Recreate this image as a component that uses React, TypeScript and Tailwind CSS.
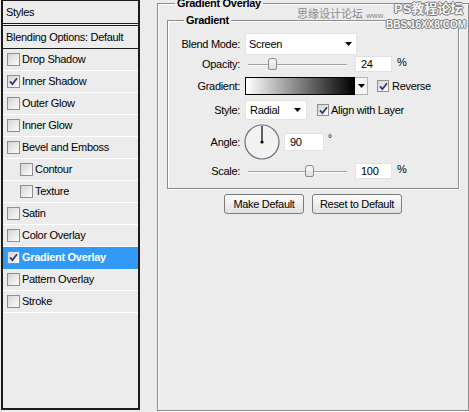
import type { ReactNode } from 'react'

const items: { label: string; checked?: boolean; indent?: boolean; active?: boolean }[] = [
  { label: 'Drop Shadow' },
  { label: 'Inner Shadow', checked: true },
  { label: 'Outer Glow' },
  { label: 'Inner Glow' },
  { label: 'Bevel and Emboss' },
  { label: 'Contour', indent: true },
  { label: 'Texture', indent: true },
  { label: 'Satin' },
  { label: 'Color Overlay' },
  { label: 'Gradient Overlay', checked: true, active: true },
  { label: 'Pattern Overlay' },
  { label: 'Stroke' },
]

function Check({ checked, size = 13 }: { checked?: boolean; size?: number }) {
  return (
    <span
      className="shrink-0 border border-[#8f8f8f] bg-[linear-gradient(135deg,#d4d4d4,#fdfdfd)] flex items-center justify-center"
      style={{ width: size, height: size }}
    >
      {checked && (
        <svg width="9" height="9" viewBox="0 0 9 9">
          <path d="M1 4.3 L3.4 7 L8 1.2" fill="none" stroke="#2f3b78" strokeWidth="1.8" />
        </svg>
      )}
    </span>
  )
}

function Arrow() {
  return (
    <svg width="7" height="4" viewBox="0 0 7 4">
      <path d="M0 0 H7 L3.5 4 Z" fill="#000" />
    </svg>
  )
}

function Slider({ pos }: { pos: number }) {
  return (
    <div className="relative w-[99px] h-[13px] ml-[3px]">
      <div className="absolute left-0 right-0 top-[6px] border-t border-[#a3a3a3] border-b border-b-white" />
      <div
        className="absolute top-0 w-[9px] h-[12px] rounded-t-[3px] rounded-b-[2px] border border-[#8a8a8a] bg-[linear-gradient(#fafafa,#dedede)]"
        style={{ left: pos }}
      />
    </div>
  )
}

function Row({ label, h, children }: { label: string; h: number; children: ReactNode }) {
  return (
    <div className="flex items-center" style={{ height: h }}>
      <span className="w-[72px] text-right">{label}</span>
      <div className="ml-[5px] flex items-center">{children}</div>
    </div>
  )
}

function Field({ value, w = 37, h = 16 }: { value: string; w?: number; h?: number }) {
  return (
    <span
      className="bg-white border border-[#e2e2e2] pl-[5px] flex items-center leading-none"
      style={{ width: w, height: h }}
    >
      {value}
    </span>
  )
}

export default function App() {
  return (
    <div className="relative w-[469px] h-[412px] bg-[#ececec] flex overflow-hidden text-[11px] leading-[13px] text-black tracking-[-0.3px] font-['Liberation_Sans','Noto_Sans_CJK_SC',sans-serif]">
      {/* styles list */}
      <div className="ml-[1px] w-[139px] h-[410px] border-t border-x-2 border-b-2 border-[#1c1c1c] flex flex-col">
        <div className="h-[25px] shrink-0 pl-[3px] flex items-center border-b-[3px] border-double border-[#1c1c1c]">Styles</div>
        <div className="h-[23px] shrink-0 pl-[3px] flex items-center border-b border-[#1c1c1c]">Blending Options: Default</div>
        {items.map((it) => (
          <div
            key={it.label}
            className={
              it.active
                ? 'h-[22px] shrink-0 flex items-center gap-[2px] bg-[#3399f7] text-white font-bold border-b border-[#3399f7]'
                : 'h-[22px] shrink-0 flex items-center gap-[2px] border-b border-white'
            }
            style={{ paddingLeft: it.indent ? 17 : 4 }}
          >
            <Check checked={it.checked} />
            <span>{it.label}</span>
          </div>
        ))}
      </div>

      {/* gradient overlay group */}
      <fieldset className="ml-[17px] -mt-[3px] w-[309px] h-[414px] border border-[#8c8c8c] shadow-[inset_1px_1px_0_#fff,1px_1px_0_#fff] px-[9px]">
        <legend className="ml-[8px] px-[2px] font-bold">Gradient Overlay</legend>
        <fieldset className="mt-[4px] w-[292px] h-[175px] border border-[#8c8c8c] shadow-[inset_1px_1px_0_#fff,1px_1px_0_#fff] pt-[6px]">
          <legend className="ml-[16px] px-[2px] font-bold">Gradient</legend>
          <Row label="Blend Mode:" h={22}>
            <span className="w-[112px] h-[22px] bg-white border border-[#e4e4e4] pl-[3px] pr-[4px] flex items-center justify-between">
              Screen
              <Arrow />
            </span>
          </Row>
          <Row label="Opacity:" h={18}>
            <Slider pos={20} />
            <span className="ml-[8px]">
              <Field value="24" />
            </span>
            <span className="ml-[5px] -mt-[4px]">%</span>
          </Row>
          <Row label="Gradient:" h={26}>
            <span className="w-[110px] h-[18px] border border-black bg-[linear-gradient(90deg,#fff,#000)]" />
            <span className="w-[13px] h-[18px] border border-[#b5b5b5] border-l-0 bg-[#f4f4f4] flex items-center justify-center">
              <Arrow />
            </span>
            <span className="ml-[9px]">
              <Check checked size={12} />
            </span>
            <span className="ml-[3px]">Reverse</span>
          </Row>
          <Row label="Style:" h={22}>
            <span className="w-[62px] h-[20px] bg-white border border-[#e4e4e4] pl-[4px] pr-[5px] flex items-center justify-between">
              Radial
              <Arrow />
            </span>
            <span className="ml-[10px]">
              <Check checked size={12} />
            </span>
            <span className="ml-[2px]">Align with Layer</span>
          </Row>
          <Row label="Angle:" h={42}>
            <svg width="36" height="36" viewBox="0 0 36 36" className="-ml-[1px]">
              <circle cx="18" cy="18" r="17" fill="#f2f2f2" stroke="#6e7080" strokeWidth="1.2" />
              <line x1="18" y1="18" x2="18" y2="2" stroke="#000" strokeWidth="1.2" />
              <circle cx="18" cy="18" r="1.6" fill="#000" />
            </svg>
            <span className="ml-[4px]">
              <Field value="90" w={40} h={18} />
            </span>
            <span className="ml-[4px] -mt-[8px] text-[10px]">°</span>
          </Row>
          <Row label="Scale:" h={16}>
            <Slider pos={57} />
            <span className="ml-[8px]">
              <Field value="100" />
            </span>
            <span className="ml-[5px] -mt-[4px]">%</span>
          </Row>
        </fieldset>
        <div className="mt-[5px] flex justify-center gap-[8px]">
          <button className="w-[80px] h-[20px] rounded-[3px] border border-[#7c7c7c] bg-[linear-gradient(#fdfdfd,#e0e0e0)]">Make Default</button>
          <button className="w-[90px] h-[20px] rounded-[3px] border border-[#7c7c7c] bg-[linear-gradient(#fdfdfd,#e0e0e0)]">Reset to Default</button>
        </div>
      </fieldset>

      {/* watermark */}
      <span className="absolute left-[297px] top-[8px] text-[#8a8a8a] text-[11px] tracking-normal">
        思缘设计论坛 <span className="text-[8px]">www.</span>
      </span>
      <span className="absolute left-[394px] top-[1px] text-[13px] leading-[15px] font-bold text-[#f6f6f6] tracking-normal [text-shadow:1px_0_#777,-1px_0_#777,0_1px_#777,0_-1px_#777]">
        PS教程论坛
      </span>
      <span className="absolute left-[386px] top-[18px] text-[10px] font-bold text-[#f6f6f6] tracking-normal [text-shadow:1px_0_#777,-1px_0_#777,0_1px_#777,0_-1px_#777]">
        BBS.16XX8.COM
      </span>
    </div>
  )
}
